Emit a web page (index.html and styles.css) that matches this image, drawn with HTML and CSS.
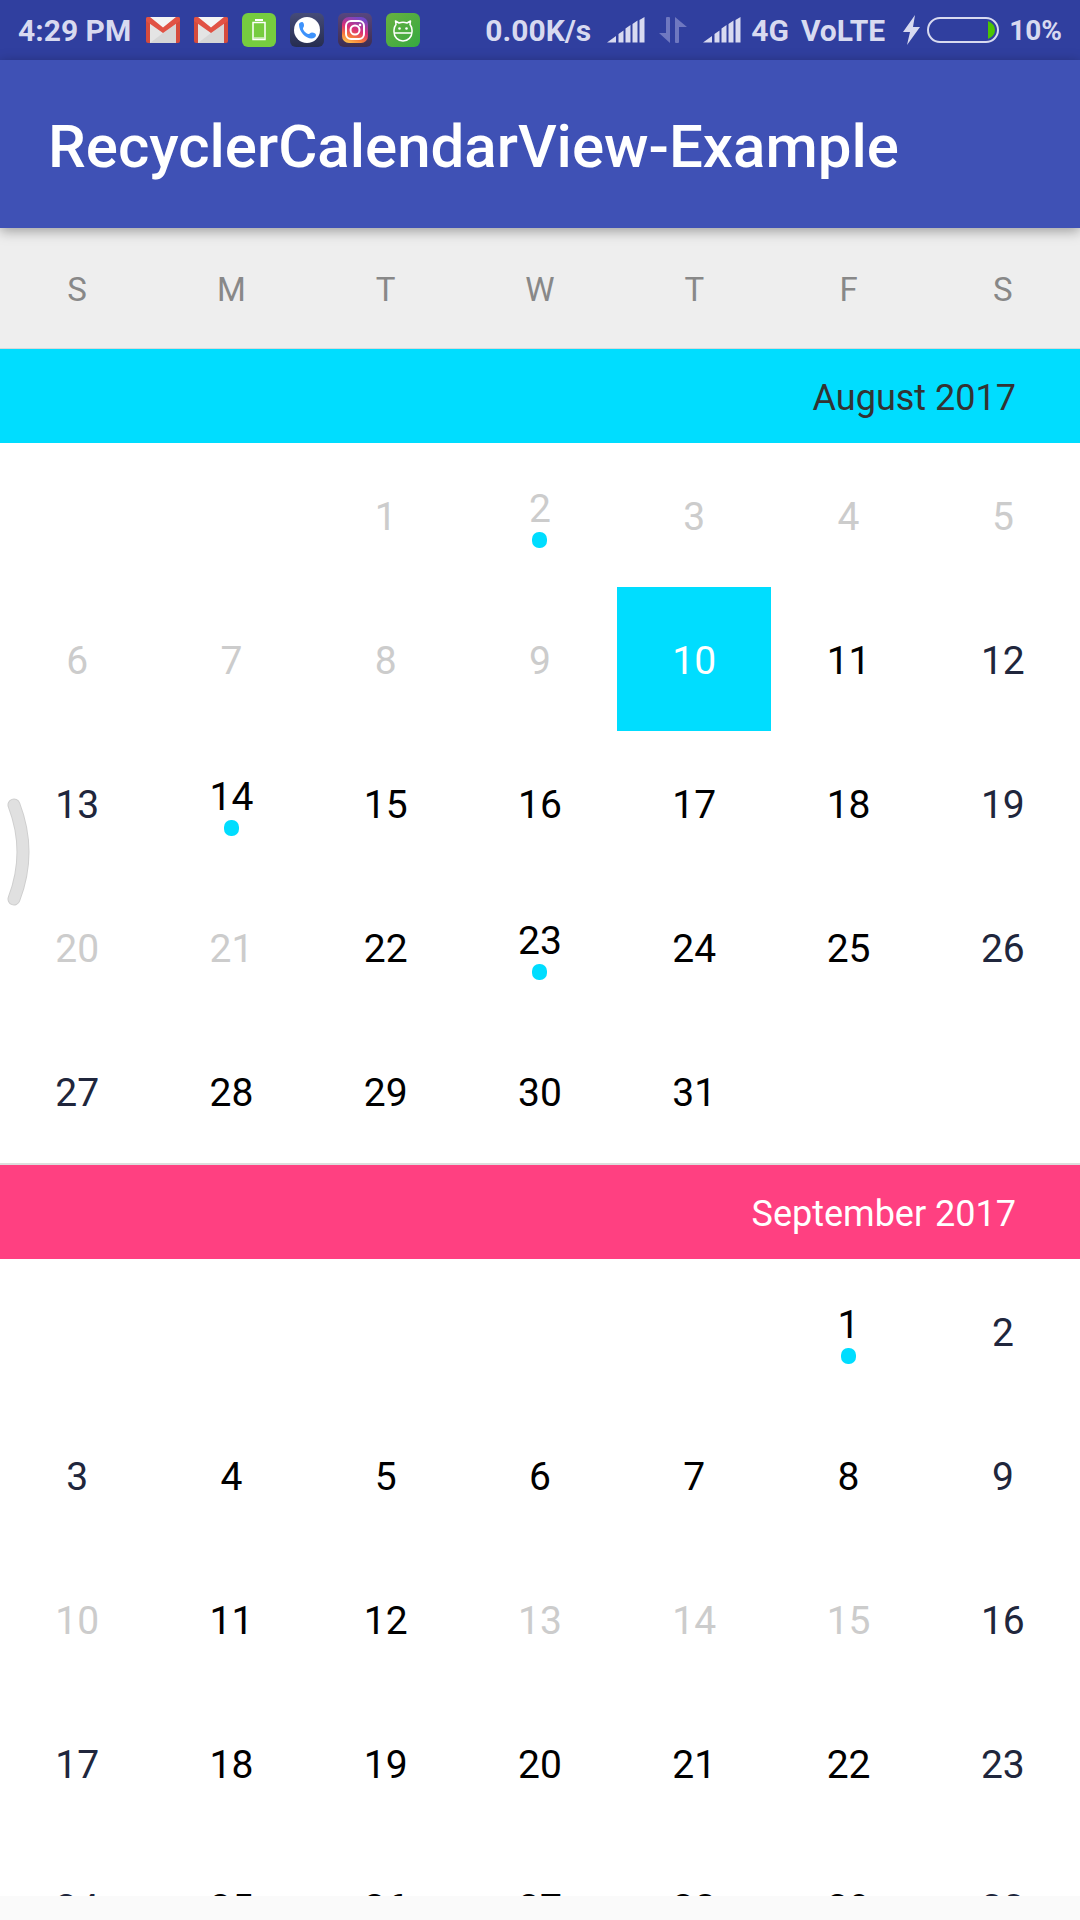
FILE: index.html
```html
<!DOCTYPE html>
<html lang="en">
<head>
<meta charset="utf-8">
<meta name="viewport" content="width=device-width, initial-scale=1">
<title>RecyclerCalendarView-Example</title>
<link rel="stylesheet" href="styles.css">
</head>
<body>
<div class="screen">
  <div class="status">
    <time class="clock">4:29 PM</time>
    <div class="notifications">
      <svg class="app-icon" viewBox="0 0 34 34" aria-hidden="true"><use href="#gmail"/></svg>
      <svg class="app-icon" viewBox="0 0 34 34" aria-hidden="true"><use href="#gmail"/></svg>
      <svg class="app-icon" viewBox="0 0 34 34" aria-hidden="true">
        <rect width="34" height="34" rx="6" fill="#76cc3f"/>
        <path d="M13 7h8" stroke="#fff" stroke-width="2"/>
        <rect x="11" y="9.500" width="12" height="17" fill="none" stroke="#fff" stroke-width="1.500"/>
        <path d="M12 25h10" stroke="#fff"/>
      </svg>
      <svg class="app-icon" viewBox="0 0 34 34" aria-hidden="true">
        <rect width="34" height="34" rx="6" fill="url(#dialer)"/>
        <circle cx="17" cy="17" r="13" fill="#fff"/>
        <path d="M9 11.500c0-1.500 1.500-2.500 3-2.500 1.200 0 2 1.500 2 3.500 0 1.500-1 2-1 3 0 1.800 3 5 5.500 5.500 1.500.2 1.500-1.500 3.500-1.500s4 1 4 2.500c0 2-2 3.500-4.500 3.500C15.500 25.500 9 18.500 9 11.500z" fill="#3d92fb"/>
      </svg>
      <svg class="app-icon" viewBox="0 0 34 34" aria-hidden="true">
        <rect width="34" height="34" rx="6" fill="url(#instaFrame)"/>
        <rect x="4" y="4" width="26" height="26" rx="7" fill="url(#insta)"/>
        <rect x="8" y="8" width="18" height="18" rx="5" fill="none" stroke="#fff" stroke-width="2"/>
        <circle cx="17" cy="17" r="4.500" fill="none" stroke="#fff" stroke-width="2"/>
        <circle cx="22" cy="12" r="1.300" fill="#fff"/>
      </svg>
      <svg class="app-icon" viewBox="0 0 34 34" aria-hidden="true">
        <rect width="34" height="34" rx="6" fill="url(#droid)"/>
        <path d="M8 19v-2c0-2 .8-4 2-5.500L9.500 8l3.500 2c2.500-1 5.500-1 8 0l3.500-2-.5 3.500c1.200 1.500 2 3.500 2 5.500v2c0 5-4 9-9 9s-9-4-9-9zM8 20h18" fill="none" stroke="#fff" stroke-width="1.500" stroke-linejoin="round"/>
        <circle cx="13.500" cy="15.500" r="1.300" fill="#fff"/>
        <circle cx="20.500" cy="15.500" r="1.300" fill="#fff"/>
      </svg>
    </div>
    <span class="speed">0.00K/s</span>
    <svg class="signal" viewBox="0 0 38 26" aria-hidden="true"><use href="#bars"/></svg>
    <svg class="transfer" viewBox="0 0 28 26" aria-hidden="true">
      <path d="M8 0h2q1 0 1 1v25L0 16h7V1q0-1 1-1zM17 26h2q1 0 1-1V10h8L16 0v25q0 1 1 1z" fill="#6f78c0"/>
    </svg>
    <svg class="signal" viewBox="0 0 38 26" aria-hidden="true"><use href="#bars"/></svg>
    <span class="network">4G</span>
    <span class="volte">VoLTE</span>
    <svg class="bolt" viewBox="0 0 17 30" aria-hidden="true"><path d="M12 0L0 17h7L4 30 17 12h-7z" fill="#d8daf0"/></svg>
    <svg class="battery" viewBox="0 0 72 26" aria-hidden="true">
      <rect x="1" y="1" width="70" height="24" rx="12" fill="none" stroke="#d8daf0" stroke-width="2"/>
      <path d="M61 4q7 3 7 9t-7 9z" fill="#4bc400"/>
    </svg>
    <span class="percent">10%</span>
  </div>

  <header class="app-bar"><h1 class="title">RecyclerCalendarView-Example</h1></header>

  <div class="weekdays">
    <span>S</span><span>M</span><span>T</span><span>W</span><span>T</span><span>F</span><span>S</span>
  </div>

  <main class="months">
    <section class="month">
      <h2 class="month-name current">August 2017</h2>
      <table class="days" aria-label="August 2017">
        <tr><td></td><td></td><td><button class="day" disabled>1</button></td><td><button class="day marked" disabled>2</button></td><td><button class="day" disabled>3</button></td><td><button class="day" disabled>4</button></td><td><button class="day" disabled>5</button></td></tr>
        <tr><td><button class="day" disabled>6</button></td><td><button class="day" disabled>7</button></td><td><button class="day" disabled>8</button></td><td><button class="day" disabled>9</button></td><td><button class="day selected">10</button></td><td><button class="day">11</button></td><td><button class="day">12</button></td></tr>
        <tr><td><button class="day">13</button></td><td><button class="day marked">14</button></td><td><button class="day">15</button></td><td><button class="day">16</button></td><td><button class="day">17</button></td><td><button class="day">18</button></td><td><button class="day">19</button></td></tr>
        <tr><td><button class="day" disabled>20</button></td><td><button class="day" disabled>21</button></td><td><button class="day">22</button></td><td><button class="day marked">23</button></td><td><button class="day">24</button></td><td><button class="day">25</button></td><td><button class="day">26</button></td></tr>
        <tr><td><button class="day">27</button></td><td><button class="day">28</button></td><td><button class="day">29</button></td><td><button class="day">30</button></td><td><button class="day">31</button></td><td></td><td></td></tr>
      </table>
    </section>
    <section class="month">
      <h2 class="month-name">September 2017</h2>
      <table class="days" aria-label="September 2017">
        <tr><td></td><td></td><td></td><td></td><td></td><td><button class="day marked">1</button></td><td><button class="day">2</button></td></tr>
        <tr><td><button class="day">3</button></td><td><button class="day">4</button></td><td><button class="day">5</button></td><td><button class="day">6</button></td><td><button class="day">7</button></td><td><button class="day">8</button></td><td><button class="day">9</button></td></tr>
        <tr><td><button class="day" disabled>10</button></td><td><button class="day">11</button></td><td><button class="day">12</button></td><td><button class="day" disabled>13</button></td><td><button class="day" disabled>14</button></td><td><button class="day" disabled>15</button></td><td><button class="day">16</button></td></tr>
        <tr><td><button class="day">17</button></td><td><button class="day">18</button></td><td><button class="day">19</button></td><td><button class="day">20</button></td><td><button class="day">21</button></td><td><button class="day">22</button></td><td><button class="day">23</button></td></tr>
        <tr><td><button class="day">24</button></td><td><button class="day">25</button></td><td><button class="day">26</button></td><td><button class="day">27</button></td><td><button class="day">28</button></td><td><button class="day">29</button></td><td><button class="day">30</button></td></tr>
      </table>
    </section>
  </main>

  <svg class="edge-handle" viewBox="0 0 24 108" aria-hidden="true">
    <path d="M7 7Q25 54 7 101" fill="none" stroke="#cfcfcf" stroke-width="13" stroke-linecap="round"/>
    <path d="M7 7Q25 54 7 101" fill="none" stroke="#e0e0e0" stroke-width="11" stroke-linecap="round"/>
  </svg>
</div>

<svg class="defs" width="0" height="0" aria-hidden="true">
  <defs>
    <linearGradient id="dialer" x2="0" y2="1"><stop stop-color="#454b78"/><stop offset="1" stop-color="#262d50"/></linearGradient>
    <linearGradient id="instaFrame" x2="0" y2="1"><stop stop-color="#57467f"/><stop offset="1" stop-color="#3d2d51"/></linearGradient>
    <linearGradient id="insta" x1=".2" y1="1" x2=".6" y2="0"><stop stop-color="#fdc44f"/><stop offset=".25" stop-color="#f77b3a"/><stop offset=".55" stop-color="#d92f78"/><stop offset="1" stop-color="#7048c8"/></linearGradient>
    <linearGradient id="droid" x2="1" y2="1"><stop stop-color="#69b040"/><stop offset="1" stop-color="#35aa41"/></linearGradient>
    <symbol id="gmail" viewBox="0 0 34 34">
      <rect y="4" width="34" height="26" rx="2" fill="#d54b3d"/>
      <path d="M4 4h26v26H4z" fill="#e4e4e4"/>
      <path d="M4 30L17 20l13-9v19z" fill="#d6d6d6"/>
      <path d="M4 4h26L17 15z" fill="#f4f4f4"/>
      <path d="M0 6q0-2 2-2h2l13 10.500L30 4h2q2 0 2 2v2L17 20 0 8z" fill="#e15244"/>
    </symbol>
    <symbol id="bars" viewBox="0 0 38 26">
      <path d="M0 25.500L9 19v6.500zM11.500 17l5-3.500v12h-5zM18.500 11.500l5-3.500v17.500h-5zM25.500 7l5-3.500v22h-5zM32.500 3l5-3v25.500h-5z" fill="#d8daf0"/>
    </symbol>
  </defs>
</svg>
</body>
</html>
```
FILE: styles.css
```css
* {
  box-sizing: border-box;
}

body {
  margin: 0;
  background: #fafafa;
  font-family: Roboto, "Noto Sans", sans-serif;
}

.screen {
  position: relative;
  display: flex;
  flex-direction: column;
  height: 100vh;
  padding-bottom: 24px;
}

.defs {
  position: absolute;
}

/* Status bar */
.status {
  flex: none;
  display: flex;
  align-items: center;
  height: 60px;
  padding: 0 18px;
  background: #303f9f;
  color: #d8daf0;
  font-size: 30px;
  font-weight: 700;
  white-space: nowrap;
}

.status svg {
  flex: none;
  display: block;
}

.notifications {
  display: flex;
  gap: 14px;
  margin-left: 15px;
}

.app-icon {
  width: 34px;
  height: 34px;
}

.speed {
  margin-left: auto;
}

.signal {
  width: 38px;
  height: 26px;
  margin-left: 16px;
}

.transfer {
  width: 28px;
  height: 26px;
  margin-left: 14px;
}

.network {
  margin-left: 10px;
}

.volte {
  margin-left: 12px;
}

.bolt {
  width: 17px;
  height: 30px;
  margin-left: 18px;
}

.battery {
  width: 72px;
  height: 26px;
  margin-left: 7px;
}

.percent {
  margin-left: 10px;
  font-size: 28px;
}

/* App bar */
.app-bar {
  position: relative;
  z-index: 1;
  flex: none;
  display: flex;
  align-items: center;
  height: 168px;
  padding: 4px 48px 0;
  background: #3f51b5;
  box-shadow: 0 3px 12px rgba(0, 0, 0, 0.35);
}

.title {
  margin: 0;
  color: #fff;
  font-size: 60px;
  font-weight: 500;
  white-space: nowrap;
}

/* Calendar */
.weekdays {
  flex: none;
  display: grid;
  grid-template-columns: repeat(7, 1fr);
  align-items: center;
  height: 121px;
  padding-top: 3px;
  border-bottom: 1px solid #d8d8d8;
  background: #eee;
  color: #888;
  font-size: 33px;
  text-align: center;
}

.months {
  flex: 1;
  min-height: 0;
  overflow: hidden;
  background: #fff;
}

.month + .month {
  border-top: 2px solid #ddd;
}

.month-name {
  margin: 0;
  padding: 4px 64px 0;
  background: #ff4081;
  color: #fff;
  font-size: 36px;
  font-weight: 400;
  line-height: 90px;
  text-align: right;
}

.month-name.current {
  background: #00ddff;
  color: #333;
}

.days {
  width: 100%;
  border-collapse: collapse;
  table-layout: fixed;
}

.days td {
  height: 144px;
  padding: 0;
}

.day {
  display: flex;
  flex-direction: column;
  align-items: center;
  justify-content: center;
  width: 100%;
  height: 144px;
  padding: 4px 0 0;
  border: 0;
  background: none;
  color: #000;
  font: 400 39px/46px Roboto, "Noto Sans", sans-serif;
}

td:first-child .day,
td:last-child .day {
  color: #20263c;
}

.days .day:disabled {
  color: #ccc;
}

.day.selected {
  background: #00ddff;
  color: #fff;
}

.day.marked::after {
  content: "";
  width: 15px;
  height: 16px;
  border-radius: 7px;
  background: #00ddff;
}

/* Swipe handle floating over the left edge */
.edge-handle {
  position: absolute;
  top: 798px;
  left: 7px;
  width: 24px;
  height: 108px;
}
```
